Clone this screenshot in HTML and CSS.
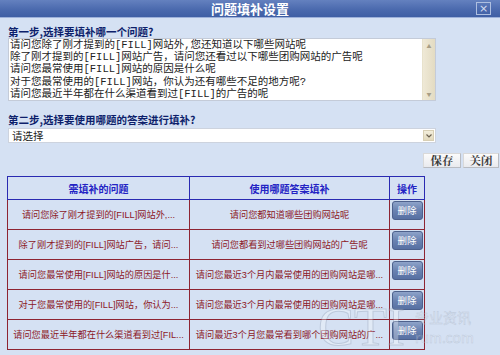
FILE: index.html
```html
<!DOCTYPE html>
<html lang="zh">
<head>
<meta charset="utf-8">
<title>问题填补设置</title>
<link rel="stylesheet" href="styles.css">
</head>
<body>
<div class="dialog">
  <div class="titlebar">
    <span class="title">问题填补设置</span>
    <span class="close">×</span>
  </div>
  <div class="content">
    <div class="label">第一步,选择要填补哪一个问题?</div>
    <div class="listbox">
      <div class="list-items">
        <div class="item">请问您除了刚才提到的[FILL]网站外,您还知道以下哪些网站呢</div>
        <div class="item">除了刚才提到的[FILL]网站广告，请问您还看过以下哪些团购网站的广告呢</div>
        <div class="item">请问您最常使用[FILL]网站的原因是什么呢</div>
        <div class="item">对于您最常使用的[FILL]网站，你认为还有哪些不足的地方呢?</div>
        <div class="item">请问您最近半年都在什么渠道看到过[FILL]的广告的呢</div>
      </div>
      <div class="scrollbar">
        <span class="arrow">&#9650;</span>
        <span class="arrow">&#9660;</span>
      </div>
    </div>
    <div class="label label2">第二步,选择要使用哪题的答案进行填补?</div>
    <div class="select">
      <span class="select-text">请选择</span>
      <span class="select-btn"><svg width="6" height="4" viewBox="0 0 6 4"><path d="M0.5 0.5 L3 3 L5.5 0.5" fill="none" stroke="#6b6150" stroke-width="1.2"/></svg></span>
    </div>
    <div class="actions">
      <button class="btn">保存</button>
      <button class="btn">关闭</button>
    </div>
    <table class="grid">
      <colgroup><col class="c1"><col class="c2"><col class="c3"></colgroup>
      <thead>
        <tr><th>需填补的问题</th><th>使用哪题答案填补</th><th>操作</th></tr>
      </thead>
      <tbody>
        <tr><td>请问您除了刚才提到的[FILL]网站外,...</td><td>请问您都知道哪些团购网站呢</td><td class="op"><span class="del">删除</span></td></tr>
        <tr><td>除了刚才提到的[FILL]网站广告，请问...</td><td>请问您都看到过哪些团购网站的广告呢</td><td class="op"><span class="del">删除</span></td></tr>
        <tr><td>请问您最常使用[FILL]网站的原因是什...</td><td>请问您最近3个月内最常使用的团购网站是哪...</td><td class="op"><span class="del">删除</span></td></tr>
        <tr><td>对于您最常使用的[FILL]网站，你认为...</td><td>请问您最近3个月内最常使用的团购网站是哪...</td><td class="op"><span class="del">删除</span></td></tr>
        <tr><td>请问您最近半年都在什么渠道看到过[FIL...</td><td>请问最近3个月您最常看到哪个团购网站的广...</td><td class="op"><span class="del">删除</span></td></tr>
      </tbody>
    </table>
  </div>
  <div class="watermark" aria-hidden="true">
    <span class="wm-big">CTI</span>
    <span class="wm-small">专业资讯<br>rum.com</span>
  </div>
</div>
</body>
</html>
```
FILE: styles.css
```css
html, body {
  margin: 0;
  padding: 0;
}
body {
  width: 500px;
  height: 355px;
  overflow: hidden;
  background: #d5e1f3;
  font-family: "Noto Sans CJK SC", sans-serif;
}
.dialog {
  position: relative;
  width: 500px;
  height: 355px;
}
.titlebar {
  position: relative;
  height: 17px;
  display: flex;
  align-items: center;
  justify-content: center;
  background: linear-gradient(to bottom, #6481bf 0%, #4b6aae 55%, #3f5fa4 100%);
  border-bottom: 1px solid #9db1da;
}
.title {
  color: #ffffff;
  font-size: 13px;
  font-weight: bold;
  line-height: 17px;
}
.close {
  position: absolute;
  right: 9px;
  top: 2px;
  width: 13px;
  height: 11px;
  border: 1px solid #aebfe0;
  color: #d2dcf0;
  font-family: "DejaVu Sans", sans-serif;
  font-size: 11px;
  line-height: 11px;
  text-align: center;
}
.content {
  padding: 7px 0 0 8px;
}
.label {
  font-size: 10.5px;
  font-weight: bold;
  color: #0d1f6b;
  line-height: 13px;
  height: 13px;
}
.listbox {
  display: flex;
  width: 428px;
  height: 63px;
  box-sizing: border-box;
  border: 1px solid #c4cbd8;
  background: #ffffff;
}
.list-items {
  flex: 1;
  padding: 0 0 0 1px;
  overflow: hidden;
}
.item {
  font-family: "Liberation Mono", "Noto Sans CJK SC", monospace;
  font-size: 10.5px;
  line-height: 12.2px;
  height: 12.2px;
  color: #222222;
  white-space: nowrap;
}
.scrollbar {
  width: 12px;
  background: linear-gradient(to right, #efe9d6, #e3dbc2);
  border-left: 1px solid #e8e2cc;
  display: flex;
  flex-direction: column;
  justify-content: space-between;
  align-items: center;
  padding: 4px 0 3px;
}
.arrow {
  font-size: 5px;
  color: #a89e86;
  line-height: 6px;
}
.label2 {
  margin-top: 12px;
}
.select {
  margin-top: 2px;
  width: 428px;
  height: 15px;
  box-sizing: border-box;
  border: 1px solid #cdd3de;
  background: #ffffff;
  display: flex;
  align-items: center;
  justify-content: space-between;
}
.select-text {
  font-size: 10.5px;
  line-height: 13px;
  color: #222222;
  padding-left: 3px;
}
.select-btn {
  width: 11px;
  height: 11px;
  margin-right: 1px;
  background: linear-gradient(to bottom, #f3eedc, #e2d9bd);
  border: 1px solid #d8cfb4;
  box-sizing: border-box;
  display: flex;
  align-items: center;
  justify-content: center;
}
.actions {
  margin-top: 10px;
  display: flex;
  justify-content: flex-end;
  gap: 2px;
  padding-right: 1px;
  height: 15px;
}
.btn {
  height: 15px;
  width: 38px;
  padding: 0;
  border: 1px solid #d9d9d9;
  border-bottom-color: #b9bcc2;
  border-right-color: #b9bcc2;
  background: linear-gradient(to bottom, #fbfbfb, #e9eaee);
  font-family: "Noto Serif CJK SC", "Noto Sans CJK SC", serif;
  font-size: 11.5px;
  font-weight: bold;
  color: #3c3c3c;
  line-height: 13px;
}
.btn + .btn {
  width: 36px;
}
.grid {
  margin-top: 8px;
  margin-left: -1px;
  width: 417px;
  table-layout: fixed;
  border-collapse: collapse;
  font-family: "Liberation Sans", "Noto Sans CJK SC", sans-serif;
}
.c1 { width: 182px; }
.c2 { width: 200px; }
.c3 { width: 35px; }
.grid th {
  height: 22px;
  border: 1px solid #2a2ab2;
  color: #2323c4;
  font-size: 10px;
  font-weight: bold;
  padding: 0;
  text-align: center;
  vertical-align: middle;
}
.grid td {
  height: 28px;
  border: 1px solid #8e2432;
  color: #8c1826;
  font-size: 9.2px;
  line-height: 12px;
  padding: 0;
  text-align: center;
  vertical-align: middle;
  white-space: nowrap;
  overflow: hidden;
}
.grid td.op {
  vertical-align: top;
  padding-top: 1px;
}
.del {
  display: block;
  margin: 0 auto;
  width: 31px;
  height: 19px;
  box-sizing: border-box;
  border: 1px solid #4d618d;
  border-radius: 3px;
  background: linear-gradient(to bottom, #8ea3c9 0%, #6a82b1 50%, #5770a2 100%);
  color: #ffffff;
  font-size: 9.5px;
  line-height: 17px;
  text-align: center;
}
.watermark {
  position: absolute;
  left: 318px;
  top: 300px;
  display: flex;
  align-items: center;
  gap: 10px;
  opacity: 0.3;
  pointer-events: none;
}
.wm-big {
  font-family: "Liberation Serif", serif;
  font-size: 54px;
  line-height: 54px;
  color: #ffffff;
  -webkit-text-stroke: 1px #8894a8;
}
.wm-small {
  font-family: "Noto Sans CJK SC", sans-serif;
  font-size: 14px;
  line-height: 20px;
  color: #ffffff;
  -webkit-text-stroke: 0.5px #8894a8;
}
```
